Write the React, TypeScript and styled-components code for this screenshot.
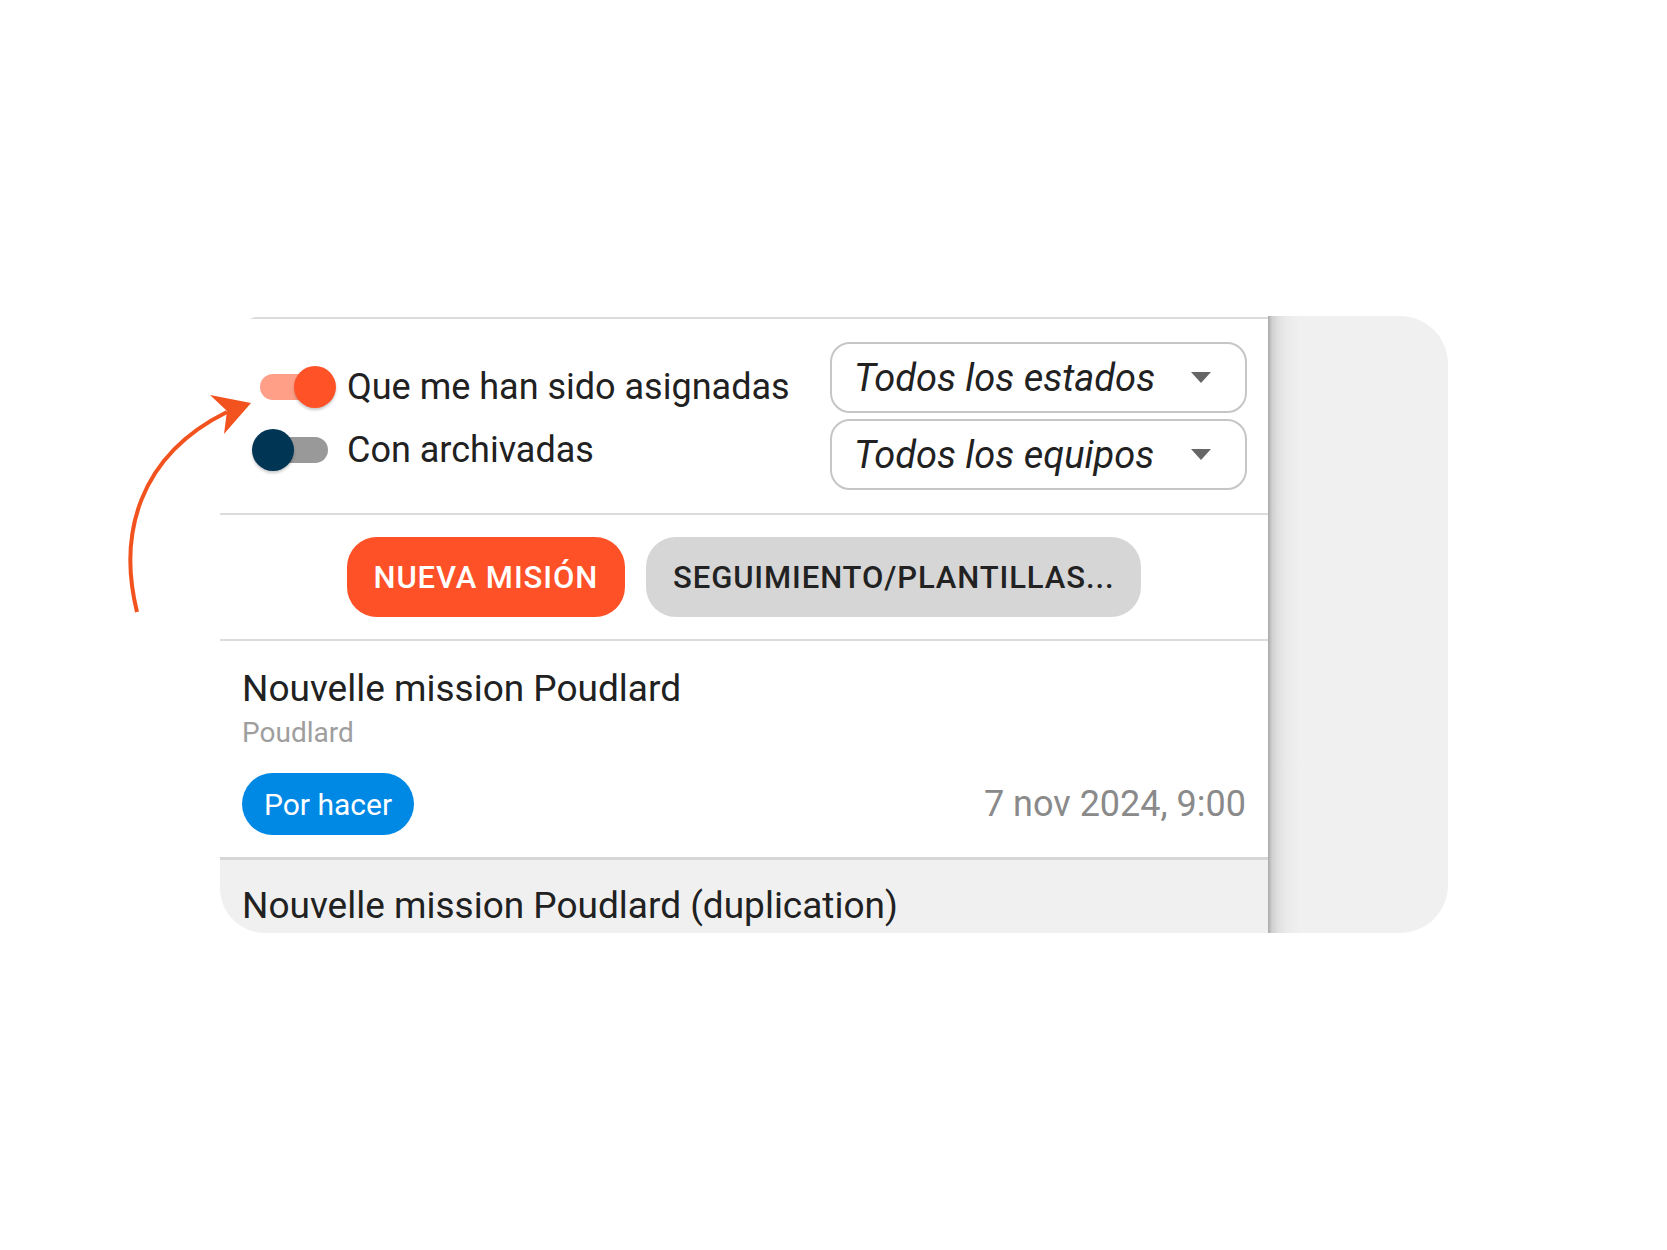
import React from 'react'
import styled, { createGlobalStyle } from 'styled-components'

const GlobalStyle = createGlobalStyle`
  html, body {
    margin: 0;
    padding: 0;
    background: #fff;
  }
  body {
    font-family: Roboto, 'Liberation Sans', Arial, sans-serif;
    color: #212121;
  }
  * {
    box-sizing: border-box;
  }
`

const Page = styled.div`
  position: relative;
  min-height: 1250px;
  padding: 316px 0 0 220px;
`

const Card = styled.section`
  display: grid;
  grid-template-columns: 1048px 180px;
  width: 1228px;
  height: 617px;
  border-radius: 45px 48px 48px 45px;
  overflow: hidden;
`

const ListColumn = styled.div`
  display: flex;
  flex-direction: column;
  margin-top: 1px;
  border-top: 2px solid #dcdcdc;
  background: #fff;
  overflow: hidden;

  > * {
    flex-shrink: 0;
  }
`

const SidePanel = styled.aside`
  background: linear-gradient(
    to right,
    #a9a9a9 0,
    #cfcfcf 4px,
    #e0e0e0 10px,
    #eaeaea 18px,
    #f0f0f0 32px
  );
`

const FilterBar = styled.div`
  display: flex;
  align-items: center;
  justify-content: space-between;
  height: 196px;
  padding: 0 21px 0 32px;
  border-bottom: 2px solid #dcdcdc;
`

const ToggleList = styled.div`
  display: flex;
  flex-direction: column;
  gap: 21px;
  margin-top: 4px;
`

const ToggleRow = styled.label`
  display: flex;
  align-items: center;
  gap: 11px;
  font-size: 36px;
  line-height: 42px;
  color: #212121;
`

const SwitchRoot = styled.span`
  position: relative;
  flex-shrink: 0;
  width: 84px;
  height: 42px;
`

const Track = styled.span<{ $on: boolean }>`
  position: absolute;
  left: 8px;
  right: 8px;
  top: 8px;
  height: 26px;
  border-radius: 13px;
  background: ${(p) => (p.$on ? '#ff9f87' : '#999999')};
`

const Thumb = styled.span<{ $on: boolean }>`
  position: absolute;
  top: 0;
  left: ${(p) => (p.$on ? '42px' : '0')};
  width: 42px;
  height: 42px;
  border-radius: 50%;
  background: ${(p) => (p.$on ? '#ff5227' : '#003554')};
  box-shadow: 0 2px 3px rgba(0, 0, 0, 0.22);
`

const SelectStack = styled.div`
  display: flex;
  flex-direction: column;
  gap: 6px;
`

const Select = styled.div`
  display: flex;
  align-items: center;
  justify-content: space-between;
  width: 417px;
  height: 71px;
  padding: 0 34px 0 22px;
  border: 2px solid #c6c6c6;
  border-radius: 20px;
  font-size: 38px;
  font-style: italic;
  color: #212121;
`

const Caret = styled.span`
  width: 0;
  height: 0;
  border-left: 10px solid transparent;
  border-right: 10px solid transparent;
  border-top: 11px solid #666;
`

const ActionBar = styled.div`
  display: flex;
  justify-content: center;
  gap: 21px;
  padding: 22px 0;
  border-bottom: 2px solid #dcdcdc;
`

const Button = styled.button<{ $primary?: boolean }>`
  height: 80px;
  padding: 0 27px;
  border: none;
  border-radius: 30px;
  font-family: Roboto, 'Liberation Sans', Arial, sans-serif;
  font-size: 31px;
  font-weight: 500;
  letter-spacing: 0.9px;
  text-transform: uppercase;
  background: ${(p) => (p.$primary ? '#ff5128' : '#d6d6d6')};
  color: ${(p) => (p.$primary ? '#fff' : '#222')};
`

const MissionItem = styled.div<{ $muted?: boolean }>`
  padding: ${(p) => (p.$muted ? '24px' : '26px')} 22px 22px;
  border-bottom: 3px solid #d6d6d6;
  background: ${(p) => (p.$muted ? '#f0f0f0' : '#fff')};
`

const MissionTitle = styled.div`
  font-size: 37px;
  line-height: 44px;
  color: #212121;
`

const MissionTeam = styled.div`
  margin-top: 5px;
  font-size: 28px;
  line-height: 34px;
  color: #9e9e9e;
`

const MissionFooter = styled.div`
  display: flex;
  align-items: center;
  justify-content: space-between;
  margin-top: 23px;
`

const StatusChip = styled.span`
  display: inline-flex;
  align-items: center;
  height: 62px;
  padding: 0 22px;
  border-radius: 31px;
  background: #0088e5;
  color: #fff;
  font-size: 30px;
`

const MissionDate = styled.span`
  font-size: 36px;
  color: #8a8a8a;
`

const Annotation = styled.svg`
  position: absolute;
  left: 0;
  top: 0;
  pointer-events: none;
`

const Switch = ({ on }: { on: boolean }) => (
  <SwitchRoot>
    <Track $on={on} />
    <Thumb $on={on} />
  </SwitchRoot>
)

export default function App() {
  return (
    <Page>
      <GlobalStyle />
      <Card>
        <ListColumn>
          <FilterBar>
            <ToggleList>
              <ToggleRow>
                <Switch on />
                Que me han sido asignadas
              </ToggleRow>
              <ToggleRow>
                <Switch on={false} />
                Con archivadas
              </ToggleRow>
            </ToggleList>
            <SelectStack>
              <Select>
                Todos los estados
                <Caret />
              </Select>
              <Select>
                Todos los equipos
                <Caret />
              </Select>
            </SelectStack>
          </FilterBar>
          <ActionBar>
            <Button $primary>Nueva misión</Button>
            <Button>Seguimiento/plantillas...</Button>
          </ActionBar>
          <MissionItem>
            <MissionTitle>Nouvelle mission Poudlard</MissionTitle>
            <MissionTeam>Poudlard</MissionTeam>
            <MissionFooter>
              <StatusChip>Por hacer</StatusChip>
              <MissionDate>7 nov 2024, 9:00</MissionDate>
            </MissionFooter>
          </MissionItem>
          <MissionItem $muted>
            <MissionTitle>Nouvelle mission Poudlard (duplication)</MissionTitle>
          </MissionItem>
        </ListColumn>
        <SidePanel />
      </Card>
      <Annotation width="300" height="700" viewBox="0 0 300 700">
        <path
          d="M137 612 C118 535 138 456 227 412"
          fill="none"
          stroke="#f2521e"
          strokeWidth="4"
        />
        <polygon points="251,403 210,395 227,411 224,434" fill="#f2521e" />
      </Annotation>
    </Page>
  )
}
